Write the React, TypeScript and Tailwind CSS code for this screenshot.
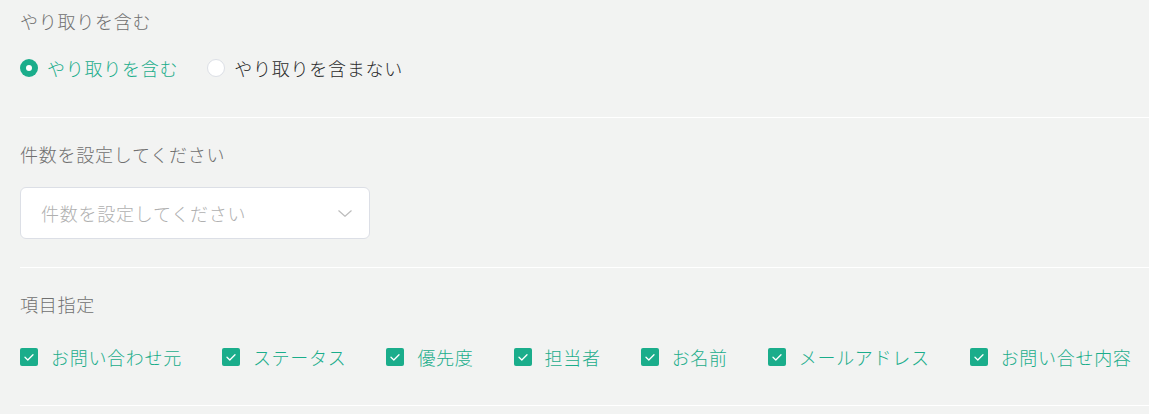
import { useState } from 'react'

const fields = ['お問い合わせ元', 'ステータス', '優先度', '担当者', 'お名前', 'メールアドレス', 'お問い合せ内容']

function Radio({ checked, label, onClick }: { checked: boolean; label: string; onClick: () => void }) {
  return (
    <button type="button" onClick={onClick} className="flex items-center gap-[9px] mr-[29px] whitespace-nowrap shrink-0">
      {checked ? (
        <span className="w-[18px] h-[18px] rounded-full bg-[#1aad8b] flex items-center justify-center">
          <span className="w-[6px] h-[6px] rounded-full bg-white" />
        </span>
      ) : (
        <span className="w-[18px] h-[18px] rounded-full bg-white border border-[#dcdfe6]" />
      )}
      <span className={checked ? 'text-[#1aad8b]' : 'text-[#2b2b2b]'}>{label}</span>
    </button>
  )
}

function Check({ label }: { label: string }) {
  return (
    <label className="flex items-center gap-[13px] mr-[40px] text-[#1aad8b] tracking-[0.7px] whitespace-nowrap shrink-0">
      <span className="w-[18px] h-[18px] rounded-[2px] bg-[#1aad8b] flex items-center justify-center shrink-0">
        <svg width="18" height="18" viewBox="0 0 18 18" fill="none">
          <polyline points="5,9.3 7.8,12 13,6.7" stroke="white" strokeWidth="1.3" strokeLinecap="round" strokeLinejoin="round" />
        </svg>
      </span>
      <span>{label}</span>
    </label>
  )
}

function App(): JSX.Element {
  const [include, setInclude] = useState<boolean>(true)

  return (
    <div
      className="min-h-screen w-full overflow-hidden bg-[#f2f3f2] pl-5 text-[18px] font-light tracking-[0.75px] leading-6"
      style={{ fontFamily: '"Noto Sans CJK JP", "Noto Sans", sans-serif' }}
    >
      {/* やり取り */}
      <section className="pt-[9px] pb-[37px] border-b border-white">
        <div className="text-[#707070]">やり取りを含む</div>
        <div className="mt-[23px] flex items-center">
          <Radio checked={include} label="やり取りを含む" onClick={() => setInclude(true)} />
          <Radio checked={!include} label="やり取りを含まない" onClick={() => setInclude(false)} />
        </div>
      </section>

      {/* 件数 */}
      <section className="pt-6 pb-[28px] border-b border-white">
        <div className="text-[#707070]">件数を設定してください</div>
        <div className="mt-[21px] w-[350px] h-[52px] bg-white border border-[#dcdfe6] rounded-[6px] flex items-center justify-between pl-5 pr-[17px]">
          <span className="text-[#b0b0b0]">件数を設定してください</span>
          <svg width="14" height="7" viewBox="0 0 14 7" fill="none">
            <polyline points="0.5,0.5 7,6.3 13.5,0.5" stroke="#bdbdbd" strokeWidth="1.2" />
          </svg>
        </div>
      </section>

      {/* 項目指定 */}
      <section className="pt-6 pb-[36px] border-b border-white">
        <div className="text-[#707070]">項目指定</div>
        <div className="mt-[29px] flex items-center">
          {fields.map((f) => (
            <Check key={f} label={f} />
          ))}
        </div>
      </section>
    </div>
  )
}

export default App
